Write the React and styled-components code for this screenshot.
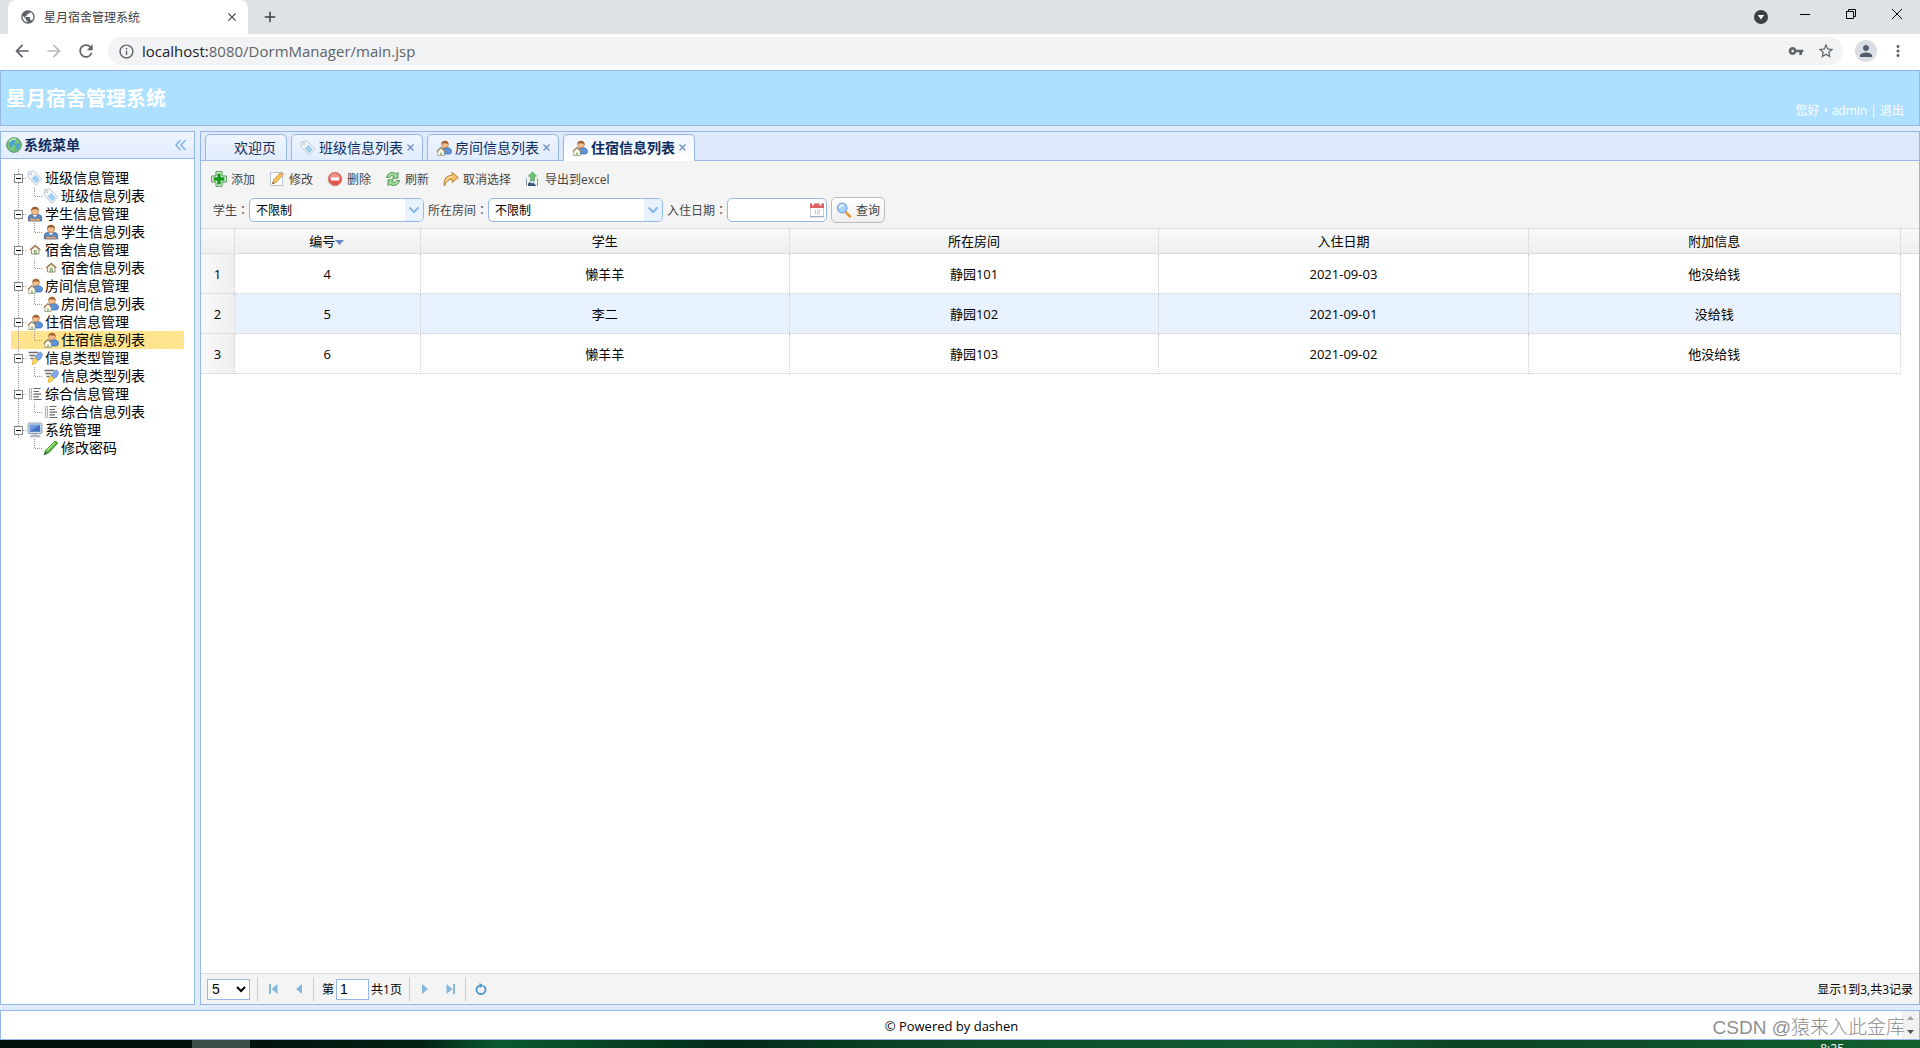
import React, { useState } from 'react';
import styled, { createGlobalStyle } from 'styled-components';
import { MdArrowBack, MdArrowForward, MdRefresh, MdInfoOutline, MdVpnKey, MdStarBorder, MdPerson, MdMoreVert, MdClose, MdAdd, MdPublic } from 'react-icons/md';

const GlobalStyle = createGlobalStyle`
    * {
        box-sizing: border-box;
    }

    body {
        margin: 0;
        color: #000;
        font-family: "Open Sans", "Noto Sans CJK SC", sans-serif;
        font-size: 13px;
    }

    button, input, select {
        margin: 0;
        font-family: inherit;
        font-size: inherit;
        color: inherit;
    }

    button {
        padding: 0;
        border: 0;
        background: none;
        cursor: pointer;
    }

    svg {
        display: block;
        flex-shrink: 0;
    }
`

/* ---------- icons ---------- */

const Svg = ({ children, ...rest }) => (
    <svg width="16" height="16" viewBox="0 0 16 16" fill="none" aria-hidden="true" {...rest}>{children}</svg>
)

const TagIcon = () => (
    <Svg>
        <path d="M1.500 1.800 6.800 1 15 9.200 9.200 15.200 1 7Z" fill="#f4f7fa" stroke="#bcc7d1" />
        <path d="m8.200 5.300 4.200 4.200-3.200 3.300L5 8.600Z" fill="#9fd3f5" stroke="#7db9e0" strokeWidth=".6" />
        <circle cx="3.800" cy="3.800" r="1" fill="#fff" stroke="#a6b1bb" strokeWidth=".7" />
    </Svg>
)

const UserIcon = () => (
    <Svg>
        <path d="M1.300 15V11.200Q1.500 8.600 5 8.400h6q3.500.2 3.700 2.800V15Z" fill="#5b88bd" stroke="#3b6294" strokeWidth=".7" />
        <path d="M5.500 8.500 8 11.200 10.500 8.500Z" fill="#fff" />
        <circle cx="8" cy="5" r="3.700" fill="#f2b98c" stroke="#a8683a" strokeWidth=".5" />
        <path d="M4.200 5.200C3.700-.6 12.300-.6 11.800 5.200 11 3 9.500 3.500 8 3.300 6 3.200 5 3.500 4.200 5.200Z" fill="#97572c" />
        <path d="M3.500 14.800v-2.500l4.500 1 4.500-1v2.500Z" fill="#e8b48d" stroke="#b57a4d" strokeWidth=".5" />
    </Svg>
)

const HouseIcon = () => (
    <Svg viewBox="-1 0 18 18">
        <path d="M4 8.500V13.500h8.500V8.500L8.200 5Z" fill="#fbf7ea" stroke="#8f8768" />
        <path d="M2.500 8.800 8.200 3.800l5.800 5" stroke="#a8835a" strokeWidth="1.700" />
        <path d="M7 13.500v-4h2.600v4Z" fill="#b7cf9d" stroke="#829a6c" strokeWidth=".8" />
    </Svg>
)

const ResidentIcon = () => (
    <Svg>
        <path d="M6 13V9.500Q7 7.500 10 7.500q5 0 5.500 3.500.2 2.500-2 3H8Z" fill="#5d93da" stroke="#3566a8" strokeWidth=".7" />
        <circle cx="9" cy="4.500" r="3.400" fill="#f4bd90" stroke="#9f6237" strokeWidth=".5" />
        <path d="M5.400 5C4.800-.6 12.600-.8 12.600 4.500 11 3 9 4 7.800 3.200 6.500 3.200 6 4 5.400 5Z" fill="#a4602f" />
        <path d="M1.800 10.800V15.500h6.400V10.800L5 8Z" fill="#fffdf2" stroke="#7f8568" strokeWidth=".7" />
        <path d="m.8 11.500 4.200-3.900 4.200 3.900" stroke="#a18558" strokeWidth="1.200" />
        <path d="M4 15.500v-3h2v3Z" fill="#9fbd87" />
    </Svg>
)

const TypeIcon = () => (
    <Svg>
        <path d="M1.500 2.500h10M2.500 5.500h6M3.500 8.500h3" stroke="#6d6d6d" strokeWidth="1.300" />
        <path d="M10 5 13.500 2 15.500 4.500 14 8.500 10.500 10.500 8 7.500Z" fill="#7ea9ec" stroke="#4f76b8" strokeWidth=".7" />
        <path d="m8 7.500 2.800 3.200L8.500 13.500 5 14.500Q5.300 10 8 7.500Z" fill="#fbd757" stroke="#d9a52c" strokeWidth=".7" />
    </Svg>
)

const ListIcon = () => (
    <Svg>
        <path d="M2.500 2.500h2v11h-2zM2.500 6.200h2M2.500 9.800h2" stroke="#b5b5b5" />
        <path d="M6.500 2.500h7M6.500 5.500h5.500M6.500 8.200h7.500M6.500 10.800h5.500M6.500 13.500h8" stroke="#666" strokeWidth="1.200" />
    </Svg>
)

const ComputerIcon = () => (
    <Svg>
        <rect x="1" y="1" width="14" height="10.500" rx="1" fill="#d5dce6" stroke="#8492a6" strokeWidth=".8" />
        <rect x="2.800" y="2.800" width="10.400" height="7" fill="#4374c4" />
        <path d="M2.800 2.800h10.400L2.800 9Z" fill="#719be0" />
        <path d="M6.500 11.500h3l.5 2H13v1.500H3.500V13.500H6Z" fill="#bcc4d0" stroke="#8995a5" strokeWidth=".5" />
    </Svg>
)

const PenIcon = () => (
    <Svg>
        <path d="M1.300 14.700 2.800 10 11.500 1.500q2.500-.8 3 2L6 12.500Z" fill="#54b53b" stroke="#2c7b1c" strokeWidth=".8" />
        <path d="m4 10.500 8-8" stroke="#a9e594" strokeWidth="1.200" />
        <path d="m1.300 14.700.9-2.900 2 2Z" fill="#444" />
    </Svg>
)

const EarthIcon = () => (
    <Svg>
        <circle cx="8" cy="8" r="7.300" fill="#79c37b" stroke="#4c8f5a" />
        <path d="M3.500 5Q7 2 10 3.500L8 6.500l2.500 1 2.500-2 1 3.500-3 4-2.500.5L6 10 3 9.500Z" fill="#4b9fd5" />
        <path d="m8 7-2.500 3.500H7V13h2.200v-2.500h1.500Z" fill="#6fd36c" />
        <path d="M3 4.500Q6 1.200 10 2" stroke="#d9f3d6" strokeWidth="1.200" />
    </Svg>
)

const AddIcon = () => (
    <Svg>
        <path d="M5 .7h6V5h4.300v6H11v4.300H5V11H.7V5H5Z" fill="#fff" stroke="#3d9140" />
        <path d="M6.300 2.500h3.400v3.800h3.800v3.400H9.700v3.800H6.300V9.700H2.500V6.300h3.800Z" fill="#159a1b" />
    </Svg>
)

const EditIcon = () => (
    <Svg>
        <path d="M1.500 1.500h12v13h-12Z" fill="#fff" stroke="#b8c4d4" />
        <path d="m3.500 13 1-4L11 2q1.500-1.200 3.500 1.200L8 10.700Z" fill="#f7c75c" stroke="#bb8536" strokeWidth=".8" />
        <path d="m10 3 3.500 2.300 1-2L12 1.400Z" fill="#e8ab8a" />
        <path d="m3.500 13 .5-2 1.500 1Z" fill="#333" />
    </Svg>
)

const RemoveIcon = () => (
    <Svg>
        <circle cx="8" cy="8" r="6.800" fill="#e2564d" stroke="#d08a84" />
        <path d="M2.500 7Q4 2 8 2.200T13.500 7Z" fill="#f0958e" />
        <rect x="3.800" y="6.500" width="8.400" height="3" fill="#fff" />
    </Svg>
)

const ReloadIcon = () => (
    <Svg>
        <path d="M1.500 6.500Q3 1.500 7.500 1.500q2.200 0 3.700 1.500L13 1.500v5.700H7.500L9.300 5.200Q6 3.200 4.200 6.500Z" fill="#a4dba0" stroke="#3f8f43" strokeWidth=".9" />
        <path d="M14.500 9.500Q13 14.500 8.500 14.500q-2.200 0-3.700-1.500L3 14.500V8.800h5.500l-1.800 2q3.300 2 5.100-1.300Z" fill="#a4dba0" stroke="#3f8f43" strokeWidth=".9" />
    </Svg>
)

const RedoIcon = () => (
    <Svg>
        <path d="M1 14.500Q.5 4.500 9 4.300V1.200L15.300 6.500 9.300 11.500V8.300Q4 8 1.800 14.500Z" fill="#f8bd62" stroke="#aa7a37" strokeWidth=".9" />
        <path d="M2.300 10.500Q4 5.800 9.800 5.500" stroke="#fde3b2" />
    </Svg>
)

const ExportIcon = () => (
    <Svg>
        <path d="M1.500 7.500v7.500M12.500 7.500v7.500" stroke="#8a94a3" />
        <path d="m7.500.8 4.200 4.400H9.500V10h-4V5.200H3.300Z" fill="#6cc479" stroke="#479555" strokeWidth=".6" />
        <path d="M3 15v-2.500l2-1.500 2 1.500 1.500-1 2.500 3V15Z" fill="#35597e" />
    </Svg>
)

const SearchIcon = () => (
    <Svg>
        <path d="m9.500 10 4.500 4.500" stroke="#e49b40" strokeWidth="2.600" strokeLinecap="round" />
        <circle cx="6.200" cy="6" r="4.800" fill="#a9d2fa" stroke="#7ca4d8" strokeWidth="1.200" />
        <path d="M3.500 5.500Q4.500 3 7.500 3.200" stroke="#fff" strokeWidth="1.500" />
    </Svg>
)

const CalendarIcon = () => (
    <Svg>
        <rect x="1.500" y="2" width="13" height="13" fill="#fff" stroke="#c6cbd4" />
        <path d="M1 1.500h14V6H1Z" fill="#dd6260" />
        <path d="M4 .5v3M11.500.5v3" stroke="#fff" strokeWidth="1.800" />
        <path d="M6.500 7.500v4.500M8.500 8h2v2h-2v2h2.500" stroke="#cdc6c0" />
        <path d="M1 14.500h14" stroke="#a5aebb" />
    </Svg>
)

const CollapseIcon = () => (
    <Svg stroke="#7fb2e6" strokeWidth="1.500">
        <path d="M7.500 3 3 8l4.500 5M12.500 3 8 8l4.500 5" />
    </Svg>
)

const ExpanderIcon = () => (
    <Svg height="18" viewBox="0 0 16 18" shapeRendering="crispEdges">
        <path d="M7.500 0v18M12 9.500h4" stroke="#999" strokeDasharray="1 1" />
        <rect x="3.500" y="5.500" width="8" height="8" fill="#fff" stroke="#848484" />
        <path d="M5 9.500h5" stroke="#000" />
    </Svg>
)

const LineIcon = ({ hidden }) => (
    <Svg height="18" viewBox="0 0 16 18" shapeRendering="crispEdges">
        {!hidden && <path d="M7.500 0v18" stroke="#999" strokeDasharray="1 1" />}
    </Svg>
)

const JoinIcon = () => (
    <Svg height="18" viewBox="0 0 16 18" shapeRendering="crispEdges">
        <path d="M7.500 0v9.500h8.500" stroke="#999" strokeDasharray="1 1" />
    </Svg>
)

const icons = {
    tag: TagIcon,
    user: UserIcon,
    house: HouseIcon,
    resident: ResidentIcon,
    type: TypeIcon,
    list: ListIcon,
    computer: ComputerIcon,
    pen: PenIcon,
}

/* ---------- data ---------- */

const menu = [
    { title: '班级信息管理', icon: 'tag', child: '班级信息列表' },
    { title: '学生信息管理', icon: 'user', child: '学生信息列表' },
    { title: '宿舍信息管理', icon: 'house', child: '宿舍信息列表' },
    { title: '房间信息管理', icon: 'resident', child: '房间信息列表' },
    { title: '住宿信息管理', icon: 'resident', child: '住宿信息列表' },
    { title: '信息类型管理', icon: 'type', child: '信息类型列表' },
    { title: '综合信息管理', icon: 'list', child: '综合信息列表' },
    { title: '系统管理', icon: 'computer', child: '修改密码', childIcon: 'pen' },
]

const tabs = [
    { title: '欢迎页' },
    { title: '班级信息列表', icon: 'tag' },
    { title: '房间信息列表', icon: 'resident' },
    { title: '住宿信息列表', icon: 'resident' },
]

const actions = [
    { title: '添加', Icon: AddIcon },
    { title: '修改', Icon: EditIcon },
    { title: '删除', Icon: RemoveIcon },
    { title: '刷新', Icon: ReloadIcon },
    { title: '取消选择', Icon: RedoIcon },
    { title: '导出到excel', Icon: ExportIcon },
]

const rows = [
    { id: 4, student: '懒羊羊', room: '静园101', date: '2021-09-03', remark: '他没给钱' },
    { id: 5, student: '李二', room: '静园102', date: '2021-09-01', remark: '没给钱' },
    { id: 6, student: '懒羊羊', room: '静园103', date: '2021-09-02', remark: '他没给钱' },
]

/* ---------- components ---------- */

const Browser = () => (
    <BrowserWrapper>
        <div className="tabStrip">
            <div className="browserTab">
                <MdPublic size={16} color="#5f6368" />
                <span>星月宿舍管理系统</span>
                <button aria-label="关闭标签页"><MdClose size={14} /></button>
            </div>
            <button className="newTab" aria-label="新标签页"><MdAdd size={18} /></button>
            <div className="windowButtons">
                <button aria-label="搜索标签页">
                    <svg width="14" height="14" viewBox="0 0 14 14"><circle cx="7" cy="7" r="7" fill="#3c4043" /><path d="M3.800 5h6.400L7 9.500Z" fill="#fff" /></svg>
                </button>
                <button aria-label="最小化">
                    <svg width="10" height="10" viewBox="0 0 10 10"><path d="M0 5.500h10" stroke="#000" /></svg>
                </button>
                <button aria-label="还原">
                    <svg width="10" height="10" viewBox="0 0 10 10" fill="none" stroke="#000"><path d="M.5 2.500h7v7h-7zM2.500 2.500v-2h7v7h-2" /></svg>
                </button>
                <button aria-label="关闭">
                    <svg width="10" height="10" viewBox="0 0 10 10" stroke="#000"><path d="m0 0 10 10M10 0 0 10" /></svg>
                </button>
            </div>
        </div>
        <div className="addressBar">
            <button aria-label="后退"><MdArrowBack size={20} /></button>
            <button aria-label="前进"><MdArrowForward size={20} color="#b9bbbe" /></button>
            <button aria-label="重新加载"><MdRefresh size={20} /></button>
            <div className="omnibox">
                <MdInfoOutline size={17} />
                <p><b>localhost:</b>8080/DormManager/main.jsp</p>
                <MdVpnKey size={16} />
                <MdStarBorder size={18} />
            </div>
            <button className="avatar" aria-label="用户"><MdPerson size={18} /></button>
            <button aria-label="菜单"><MdMoreVert size={18} /></button>
        </div>
    </BrowserWrapper>
)

const TreeNode = ({ title, icon, active, onClick, children }) => {
    const Icon = icons[icon];
    return (
        <Node className={active ? 'active' : ''} onClick={onClick}>
            {children}
            <Icon />
            <span>{title}</span>
        </Node>
    )
}

const Sidebar = () => {
    const [active, setActive] = useState('住宿信息列表');

    return (
        <SidebarWrapper>
            <div className="sidebarTitle">
                <EarthIcon />
                <h2>系统菜单</h2>
                <button aria-label="折叠菜单"><CollapseIcon /></button>
            </div>
            <ul>
                {menu.map((item, i) => (
                    <li key={item.title}>
                        <TreeNode title={item.title} icon={item.icon}>
                            <ExpanderIcon />
                        </TreeNode>
                        <TreeNode
                            title={item.child}
                            icon={item.childIcon || item.icon}
                            active={active === item.child}
                            onClick={() => setActive(item.child)}
                        >
                            <LineIcon hidden={i === menu.length - 1} />
                            <JoinIcon />
                        </TreeNode>
                    </li>
                ))}
            </ul>
        </SidebarWrapper>
    )
}

const Tabs = () => {
    const [active, setActive] = useState('住宿信息列表');

    return (
        <TabBar>
            {tabs.map(({ title, icon }) => {
                const Icon = icons[icon];
                return (
                    <Tab key={title} $active={active === title}>
                        <button className="tabTitle" onClick={() => setActive(title)}>
                            {Icon ? <Icon /> : <Svg />}
                            <span>{title}</span>
                        </button>
                        {Icon && (
                            <button aria-label={`关闭${title}`}>
                                <svg width="7" height="7" viewBox="0 0 7 7" stroke="#6f8fc4" strokeWidth="1.300"><path d="m.5.5 6 6M6.500.5l-6 6" /></svg>
                            </button>
                        )}
                    </Tab>
                )
            })}
        </TabBar>
    )
}

const ComboBox = ({ id, label }) => (
    <>
        <label htmlFor={id}>{label}<Punctuation lang="zh-TW">：</Punctuation></label>
        <Combo>
            <select id={id}>
                <option>不限制</option>
            </select>
            <span>
                <svg width="12" height="8" viewBox="0 0 12 8" fill="none"><path d="m1.500 1.500 4.500 4.500 4.500-4.500" stroke="#84b7e8" strokeWidth="2" /></svg>
            </span>
        </Combo>
    </>
)

const Toolbar = () => (
    <ToolbarWrapper>
        <div className="actions">
            {actions.map(({ title, Icon }) => (
                <button key={title}><Icon />{title}</button>
            ))}
        </div>
        <form className="filters" onSubmit={(e) => e.preventDefault()}>
            <ComboBox id="student" label="学生" />
            <ComboBox id="room" label="所在房间" />
            <label htmlFor="date">入住日期<Punctuation lang="zh-TW">：</Punctuation></label>
            <DateBox>
                <input id="date" type="text" />
                <button type="button" aria-label="选择日期"><CalendarIcon /></button>
            </DateBox>
            <SearchButton type="submit"><SearchIcon />查询</SearchButton>
        </form>
    </ToolbarWrapper>
)

const Grid = () => (
    <GridWrapper>
        <table>
            <colgroup>
                <col className="numberCol" />
                <col className="idCol" />
                <col className="dataCol" />
                <col className="dataCol" />
                <col className="dataCol" />
                <col />
                <col className="spacerCol" />
            </colgroup>
            <thead>
                <tr>
                    <th></th>
                    <th>
                        编号
                        <svg width="10" height="5" viewBox="0 0 10 5"><path d="M0 0h9L4.500 5Z" fill="#6b87c9" /></svg>
                    </th>
                    <th>学生</th>
                    <th>所在房间</th>
                    <th>入住日期</th>
                    <th>附加信息</th>
                    <th></th>
                </tr>
            </thead>
            <tbody>
                {rows.map((row, i) => (
                    <tr key={row.id} className={i === 1 ? 'hover' : ''}>
                        <td className="rowNumber">{i + 1}</td>
                        <td>{row.id}</td>
                        <td>{row.student}</td>
                        <td>{row.room}</td>
                        <td>{row.date}</td>
                        <td>{row.remark}</td>
                        <td className="spacer"></td>
                    </tr>
                ))}
            </tbody>
        </table>
    </GridWrapper>
)

const Pager = () => {
    const [page, setPage] = useState('1');

    return (
        <PagerWrapper>
            <select aria-label="每页条数" defaultValue="5">
                <option>5</option>
                <option>10</option>
                <option>20</option>
            </select>
            <Separator />
            <button aria-label="首页">
                <svg width="10" height="10" viewBox="0 0 10 10" fill="#84b6de"><path d="M1 0h2v10H1zM9.500 0v10L3.500 5Z" /></svg>
            </button>
            <button aria-label="上一页">
                <svg width="10" height="10" viewBox="0 0 10 10" fill="#84b6de"><path d="M8 0v10L2 5Z" /></svg>
            </button>
            <Separator />
            <label htmlFor="page">第</label>
            <input id="page" type="text" value={page} onChange={(e) => setPage(e.target.value)} />
            <span>共1页</span>
            <Separator />
            <button aria-label="下一页">
                <svg width="10" height="10" viewBox="0 0 10 10" fill="#84b6de"><path d="M2 0v10l6-5Z" /></svg>
            </button>
            <button aria-label="尾页">
                <svg width="10" height="10" viewBox="0 0 10 10" fill="#84b6de"><path d="M7 0h2v10H7zM.5 0v10l6-5Z" /></svg>
            </button>
            <Separator />
            <button aria-label="刷新">
                <svg width="12" height="12" viewBox="0 0 12 12" fill="none"><path d="M8.500 3Q11 4.500 10.500 7.500 9.500 11 6 11T1.500 7.500Q1 3.500 5 2.500" stroke="#4a97cc" strokeWidth="1.800" /><path d="M4.500 0v5.200l4-2.600Z" fill="#4a97cc" /></svg>
            </button>
            <p>显示1到3,共3记录</p>
        </PagerWrapper>
    )
}

const App = () => (
    <Page lang="zh-CN">
        <GlobalStyle />
        <Browser />
        <Header>
            <h1>星月宿舍管理系统</h1>
            <p>您好<Punctuation lang="zh-TW">，</Punctuation>admin | <a href="#logout">退出</a></p>
        </Header>
        <Main>
            <Sidebar />
            <Content>
                <Tabs />
                <Toolbar />
                <Grid />
                <Pager />
            </Content>
        </Main>
        <Footer>
            <p>© Powered by dashen</p>
            <div className="scroller">
                <svg width="7" height="4" viewBox="0 0 7 4"><path d="M0 4h7L3.500 0Z" fill="#a3a3a3" /></svg>
                <svg width="7" height="4" viewBox="0 0 7 4"><path d="M0 0h7L3.500 4Z" fill="#505050" /></svg>
            </div>
            <Watermark>CSDN @猿来入此金库</Watermark>
        </Footer>
        <Desktop><time>8:25</time></Desktop>
    </Page>
)

export default App;

/* ---------- styles ---------- */

const Page = styled.div`
    display: flex;
    flex-direction: column;
    height: 100vh;
    background-color: #e0ecfb;
    overflow: hidden;
`

/* full-width punctuation centred in its cell */
const Punctuation = styled.span`
    font-family: "Noto Sans CJK TC", sans-serif;
    line-height: 1;
`

const BrowserWrapper = styled.div`
    color: #5f6368;
    background-color: white;

    .tabStrip{
        display: flex;
        align-items: center;
        height: 34px;
        padding-left: 8px;
        background-color: #dee1e6;
    }

    .browserTab{
        display: flex;
        align-items: center;
        gap: 8px;
        width: 240px;
        height: 34px;
        padding: 0 9px 0 12px;
        border-radius: 8px 8px 0 0;
        background-color: white;
        color: #3c4043;
        font-size: 12px;

        span{
            flex: 1;
        }
    }

    .newTab{
        margin-left: 13px;
        color: #3c4043;
    }

    .windowButtons{
        display: flex;
        margin-left: auto;

        button{
            display: flex;
            align-items: center;
            justify-content: center;
            width: 46px;
            height: 34px;
            padding-bottom: 6px;
        }

        button:first-child{
            width: 42px;
            padding-bottom: 0;
        }
    }

    .addressBar{
        display: flex;
        align-items: center;
        gap: 12px;
        height: 36px;
        padding: 0 13px 2px 12px;
    }

    .omnibox{
        display: flex;
        flex: 1;
        align-items: center;
        gap: 13px;
        height: 28px;
        padding: 0 8px 0 10px;
        border-radius: 14px;
        background-color: #f1f3f4;

        p{
            flex: 1;
            margin: 0 0 0 -6px;
            font-size: 15px;
        }

        b{
            font-weight: 400;
            color: #202124;
        }
    }

    .avatar{
        display: flex;
        align-items: center;
        justify-content: center;
        width: 22px;
        height: 22px;
        border-radius: 50%;
        background-color: #dadde3;
        color: #4d5b6c;
    }
`

const Header = styled.header`
    display: flex;
    align-items: center;
    justify-content: space-between;
    height: 56px;
    padding: 0 15px 0 5px;
    border: 1px solid #95b8e7;
    background-color: #addfff;
    color: white;

    h1{
        margin: 0 0 2px;
        font-size: 20px;
        font-weight: 700;
    }

    p{
        align-self: flex-end;
        margin: 0 0 6px;
        font-size: 12px;
    }

    a{
        color: inherit;
        text-decoration: none;
    }
`

const Main = styled.main`
    display: flex;
    flex: 1;
    gap: 5px;
    min-height: 0;
    padding: 5px 0;
`

const SidebarWrapper = styled.aside`
    width: 195px;
    flex-shrink: 0;
    border: 1px solid #95b8e7;
    background-color: white;

    .sidebarTitle{
        display: flex;
        align-items: center;
        gap: 2px;
        height: 27px;
        padding: 0 5px;
        border-bottom: 1px solid #95b8e7;
        background: linear-gradient(to bottom, #eff5ff, #e0ecff);
    }

    h2{
        flex: 1;
        margin: 0;
        padding-bottom: 2px;
        font-size: 14px;
        font-weight: 700;
        color: #0e2d5f;
    }

    ul{
        margin: 0;
        padding: 10px;
        list-style: none;
    }
`

const Node = styled.button`
    display: flex;
    align-items: center;
    width: 100%;
    height: 18px;
    font-size: 14px;
    line-height: 18px;

    span{
        margin-left: 2px;
        white-space: nowrap;
    }

    &.active{
        background-color: #ffe48d;
    }
`

const Content = styled.section`
    display: flex;
    flex: 1;
    flex-direction: column;
    min-width: 0;
    border: 1px solid #95b8e7;
    background-color: white;
`

const TabBar = styled.nav`
    display: flex;
    align-items: flex-end;
    gap: 4px;
    height: 29px;
    padding: 0 4px;
    background-color: #deeafc;
    box-shadow: inset 0 -1px #95b8e7;
`

const Tab = styled.div`
    display: flex;
    align-items: center;
    gap: 4px;
    height: 27px;
    padding: 0 8px;
    border: 1px solid #95b8e7;
    border-bottom-color: ${({ $active }) => $active ? '#fff' : '#95b8e7'};
    border-radius: 5px 5px 0 0;
    background: ${({ $active }) => $active ? 'linear-gradient(to bottom, #eff5ff, #fff)' : 'linear-gradient(to bottom, #eff5ff, #e0ecff)'};

    .tabTitle{
        display: flex;
        align-items: center;
        gap: 3px;
        font-size: 14px;
        font-weight: ${({ $active }) => $active ? 700 : 400};
        color: #0e2d5f;
        white-space: nowrap;
    }

    .tabTitle span{
        padding-bottom: 2px;
    }

    .tabTitle:only-child{
        padding: 0 2px 0 1px;
    }
`

const ToolbarWrapper = styled.div`
    padding: 5px 10px;
    background-color: #f4f4f4;
    font-size: 12px;
    color: #444;

    .actions{
        display: flex;
        gap: 14px;

        button{
            display: flex;
            align-items: center;
            gap: 4px;
            height: 26px;
        }
    }

    .filters{
        display: flex;
        align-items: center;
        height: 26px;
        margin-top: 5px;
        padding-left: 2px;
    }
`

const Combo = styled.div`
    position: relative;
    width: 175px;
    margin-right: 4px;
    color: #000;

    select{
        display: block;
        width: 100%;
        height: 24px;
        padding: 0 24px 0 6px;
        border: 1px solid #95b8e7;
        border-radius: 5px;
        background-color: white;
        appearance: none;
    }

    span{
        position: absolute;
        top: 1px;
        right: 1px;
        display: flex;
        align-items: center;
        justify-content: center;
        width: 18px;
        height: 22px;
        border-radius: 0 4px 4px 0;
        background-color: #e8f2ff;
        pointer-events: none;
    }
`

const DateBox = styled.div`
    display: flex;
    align-items: center;
    width: 100px;
    height: 24px;
    margin-right: 4px;
    padding-right: 1px;
    border: 1px solid #95b8e7;
    border-radius: 5px;
    background-color: white;

    input{
        flex: 1;
        min-width: 0;
        padding: 0 4px;
        border: 0;
        outline: none;
        background: none;
    }
`

const SearchButton = styled.button`
    display: flex;
    align-items: center;
    gap: 4px;
    height: 26px;
    padding: 0 4px;
    border: 1px solid #bbb;
    border-radius: 5px;
    background: linear-gradient(to bottom, #fff, #eee);
`

const GridWrapper = styled.div`
    flex: 1;
    min-height: 0;
    overflow: hidden;

    table{
        width: 100%;
        table-layout: fixed;
        border-collapse: separate;
        border-spacing: 0;
        text-align: center;
    }

    .numberCol{
        width: 34px;
    }

    .idCol{
        width: 10.8%;
    }

    .dataCol{
        width: 21.5%;
    }

    .spacerCol{
        width: 18px;
    }

    th, td{
        padding: 0;
        border-right: 1px dotted #ccc;
        border-bottom: 1px dotted #ccc;
        font-weight: 400;
    }

    th{
        height: 26px;
        padding-bottom: 2px;
        border-top: 1px solid #ddd;
        border-bottom: 1px solid #ddd;
        background: linear-gradient(to bottom, #f9f9f9, #efefef);

        svg{
            display: inline-block;
            vertical-align: middle;
        }
    }

    td{
        height: 40px;
    }

    th:last-child, .spacer{
        border-right: 0;
    }

    .spacer{
        border-bottom: 0;
        background-color: white;
    }

    .hover{
        background-color: #e8f1ff;
    }

    .rowNumber{
        background: linear-gradient(to right, #f9f9f9, #efefef);
    }
`

const PagerWrapper = styled.div`
    display: flex;
    align-items: center;
    height: 31px;
    padding: 0 6px;
    border-top: 1px solid #ddd;
    background-color: #f4f4f4;
    font-size: 12px;

    select{
        width: 43px;
        height: 21px;
        border: 1px solid #95b8e7;
        background-color: white;
        font-family: "Liberation Sans", Arial, sans-serif;
        font-size: 14px;
    }

    button{
        display: flex;
        align-items: center;
        justify-content: center;
        width: 26px;
        height: 26px;
    }

    label{
        margin-left: 6px;
    }

    input{
        width: 33px;
        height: 21px;
        margin: 0 2px;
        padding: 0 3px;
        border: 1px solid #95b8e7;
        font-family: "Liberation Sans", Arial, sans-serif;
        font-size: 14px;
    }

    p{
        margin: 0 0 0 auto;
    }
`

const Separator = styled.i`
    width: 1px;
    height: 24px;
    margin: 0 2px 0 7px;
    background-color: #ccc;

    button + &{
        margin-left: 1px;
    }
`

const Footer = styled.footer`
    position: relative;
    display: flex;
    height: 30px;
    border: 1px solid #95b8e7;
    background-color: white;

    p{
        flex: 1;
        margin: 0;
        line-height: 30px;
        text-align: center;
    }

    .scroller{
        display: flex;
        flex-direction: column;
        align-items: center;
        justify-content: space-around;
        width: 17px;
        background-color: #f1f1f1;
    }
`

const Watermark = styled.span`
    position: absolute;
    top: 4px;
    right: 14px;
    font-family: "Liberation Sans", "Noto Sans CJK SC", sans-serif;
    font-size: 19px;
    font-weight: 300;
    line-height: 26px;
    color: #8e8e8e;
    white-space: nowrap;
`

const Desktop = styled.div`
    height: 8px;
    padding-right: 76px;
    background: linear-gradient(to right, #02110a, #02110a 10%, #3a5046 10%, #3a5046 13%, #02130c 13%, #022314 22%, #0b5a30 26%, #022b18 38%, #0d4a2a 50%, #115c31 68%, #0b4425 76%, #12602f);
    font-size: 12px;
    line-height: 12px;
    color: white;
    text-align: right;
    overflow: hidden;

    time{
        display: block;
        padding-top: 3px;
    }
`
